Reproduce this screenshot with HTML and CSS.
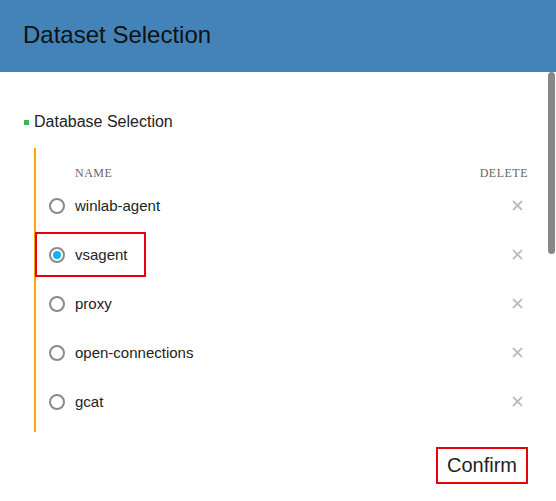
FILE: index.html
```html
<!DOCTYPE html>
<html>
<head>
<meta charset="utf-8">
<link rel="stylesheet" href="styles.css">
</head>
<body>
<div class="dialog">
  <header class="header"><h1 class="title">Dataset Selection</h1></header>
  <main class="content">
    <div class="section-title"><span class="bullet"></span>Database Selection</div>
    <div class="list">
      <div class="list-head"><span>NAME</span><span>DELETE</span></div>
      <div class="row"><span class="radio"></span><span class="name">winlab-agent</span><svg class="del" viewBox="0 0 11 11"><path d="M1 1L10 10M10 1L1 10"/></svg></div>
      <div class="row"><span class="radio checked"></span><span class="name">vsagent</span><svg class="del" viewBox="0 0 11 11"><path d="M1 1L10 10M10 1L1 10"/></svg><span class="highlight"></span></div>
      <div class="row"><span class="radio"></span><span class="name">proxy</span><svg class="del" viewBox="0 0 11 11"><path d="M1 1L10 10M10 1L1 10"/></svg></div>
      <div class="row"><span class="radio"></span><span class="name">open-connections</span><svg class="del" viewBox="0 0 11 11"><path d="M1 1L10 10M10 1L1 10"/></svg></div>
      <div class="row"><span class="radio"></span><span class="name">gcat</span><svg class="del" viewBox="0 0 11 11"><path d="M1 1L10 10M10 1L1 10"/></svg></div>
    </div>
    <div class="actions"><div class="confirm">Confirm</div></div>
  </main>
  <div class="scroll-thumb"></div>
</div>
</body>
</html>
```
FILE: styles.css
```css
* { box-sizing: border-box; }
html, body { margin: 0; padding: 0; background: #fff; }
body { font-family: "Liberation Sans", Arial, sans-serif; color: #222; }
.dialog { position: relative; width: 556px; height: 501px; overflow: hidden; }
.header { height: 72px; background: #4483b7; padding: 21px 0 0 23px; }
.title { margin: 0; font-size: 24px; line-height: 28px; font-weight: normal; color: #111; }
.content { padding: 0 28px 0 24px; }
.section-title { margin-top: 40px; display: flex; align-items: center; font-size: 16px; line-height: 20px; color: #222; }
.bullet { width: 5px; height: 5px; background: #4caf50; margin-right: 5px; }
.list { margin-top: 16px; margin-left: 10px; border-left: 2px solid #f5a800; padding-top: 13px; padding-bottom: 6px; }
.list-head { display: flex; justify-content: space-between; padding-left: 39px; height: 20px; line-height: 24px; font-family: "Liberation Serif", "Times New Roman", serif; font-size: 12px; letter-spacing: 0.5px; color: #666; }
.row { position: relative; display: flex; align-items: center; height: 49px; padding-left: 13px; font-size: 15px; }
.radio { width: 16px; height: 16px; border: 2px solid #8a8a8a; border-radius: 50%; display: flex; align-items: center; justify-content: center; margin-right: 10px; flex: none; }
.radio.checked::after { content: ""; width: 8px; height: 8px; border-radius: 50%; background: #12b2f2; }
.name { flex: 1; }
.del { width: 11px; height: 11px; margin-right: 5px; stroke: #bdbdbd; stroke-width: 1.8; fill: none; }
.highlight { position: absolute; left: -1px; top: 2px; width: 111px; height: 45px; border: 2px solid #e8000b; }
.actions { display: flex; justify-content: flex-end; margin-top: 15px; }
.confirm { width: 92px; height: 37px; border: 2px solid #e8000b; display: flex; align-items: center; justify-content: center; font-size: 20px; color: #222; }
.scroll-thumb { position: absolute; left: 548px; top: 72px; width: 7px; height: 182px; border-radius: 4px; background: #878787; }
```
